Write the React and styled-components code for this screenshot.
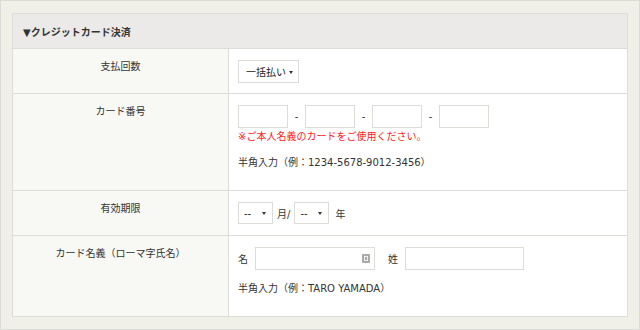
import React from "react";
import styled, { createGlobalStyle } from "styled-components";

const Global = createGlobalStyle`
  html, body { margin: 0; padding: 0; }
  body {
    font-family: "DejaVu Sans", "Noto Sans CJK JP", sans-serif;
    color: #333;
    background: #fff;
  }
  * { box-sizing: border-box; }
`;

const Frame = styled.div`
  width: 640px;
  height: 330px;
  border: 1px solid #dcdcd6;
  background: #f1f0e8;
  padding: 12px 11px 12px 11px;
`;

const Table = styled.div`
  border: 1px solid #dcdcd9;
  background: #fff;
`;

const Header = styled.div`
  height: 35px;
  background: #ebeae8;
  border-bottom: 1px solid #dcdcd9;
  padding: 0 10px;
  display: flex;
  align-items: center;
  font-size: 10px;
  font-weight: 700;
  color: #333;
`;

const Row = styled.div`
  display: grid;
  grid-template-columns: 216px 1fr;
  height: ${(p) => p.$h}px;
  border-bottom: ${(p) => (p.$last ? "none" : "1px solid #dcdcd9")};
`;

const Label = styled.div`
  background: #f8f8f4;
  border-right: 1px solid #dcdcd9;
  text-align: center;
  font-size: 10px;
  line-height: 13px;
  padding-top: 11px;
  color: #333;
`;

const Content = styled.div`
  padding: 11px 9px 0 9px;
  font-size: 10px;
  color: #333;
`;

const Line = styled.div`
  display: flex;
  align-items: center;
  gap: ${(p) => p.$gap || 0}px;
`;

const SelectBox = styled.div`
  position: relative;
  width: ${(p) => p.$w}px;
  height: ${(p) => p.$h}px;
  border: 1px solid #dcdcd9;
  background: #fff;
  display: flex;
  align-items: center;
  padding-left: ${(p) => p.$pl}px;
  font-size: 10px;
  color: #222;
`;

const Arrow = styled.span`
  position: absolute;
  right: ${(p) => p.$r}px;
  top: 50%;
  margin-top: -1px;
  width: 0;
  height: 0;
  border-left: 2px solid transparent;
  border-right: 2px solid transparent;
  border-top: 3px solid #333;
`;

const TextInput = styled.div`
  position: relative;
  width: ${(p) => p.$w}px;
  height: 23px;
  border: 1px solid #dcdcd9;
  background: #fff;
`;

const Dash = styled.span`
  width: 17px;
  text-align: center;
  font-size: 10px;
`;

const Warn = styled.div`
  color: #ff1a1a;
  font-size: 10px;
  line-height: 18px;
`;

const Hint = styled.div`
  font-size: 10px;
  line-height: 18px;
  margin-top: ${(p) => p.$mt}px;
`;

const Word = styled.span`
  font-size: 10px;
  margin-left: ${(p) => p.$ml || 0}px;
  margin-right: ${(p) => p.$mr || 0}px;
`;

const FillIcon = styled.span`
  position: absolute;
  right: 4px;
  top: 6px;
  width: 8px;
  height: 9px;
  border-radius: 1px;
  background: #a9a9a9;
  &::after {
    content: "";
    position: absolute;
    left: 2px;
    top: 2px;
    width: 4px;
    height: 5px;
    border: 1px solid #eee;
    box-sizing: border-box;
  }
`;

export default function App() {
  return (
    <>
      <Global />
      <Frame>
        <Table>
          <Header>▼クレジットカード決済</Header>
          <Row $h={45}>
            <Label>支払回数</Label>
            <Content>
              <SelectBox $w={61} $h={23} $pl={7}>
                一括払い
                <Arrow $r={5} />
              </SelectBox>
            </Content>
          </Row>
          <Row $h={97}>
            <Label>カード番号</Label>
            <Content>
              <Line>
                <TextInput $w={50} />
                <Dash>-</Dash>
                <TextInput $w={50} />
                <Dash>-</Dash>
                <TextInput $w={50} />
                <Dash>-</Dash>
                <TextInput $w={50} />
              </Line>
              <Warn>※ご本人名義のカードをご使用ください。</Warn>
              <Hint $mt={8}>半角入力（例：1234-5678-9012-3456）</Hint>
            </Content>
          </Row>
          <Row $h={45}>
            <Label>有効期限</Label>
            <Content>
              <Line $gap={4}>
                <SelectBox $w={35} $h={22} $pl={5}>
                  --
                  <Arrow $r={6} />
                </SelectBox>
                <Word>月/</Word>
                <SelectBox $w={35} $h={22} $pl={5}>
                  --
                  <Arrow $r={6} />
                </SelectBox>
                <Word $ml={2}>年</Word>
              </Line>
            </Content>
          </Row>
          <Row $h={80} $last>
            <Label>カード名義（ローマ字氏名）</Label>
            <Content>
              <Line>
                <Word $mr={7}>名</Word>
                <TextInput $w={120}>
                  <FillIcon />
                </TextInput>
                <Word $ml={13} $mr={7}>姓</Word>
                <TextInput $w={119} />
              </Line>
              <Hint $mt={10}>半角入力（例：TARO YAMADA）</Hint>
            </Content>
          </Row>
        </Table>
      </Frame>
    </>
  );
}
